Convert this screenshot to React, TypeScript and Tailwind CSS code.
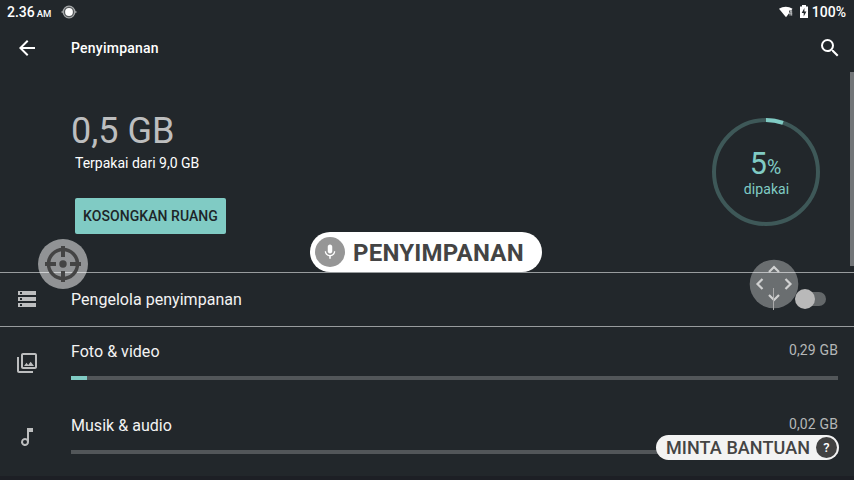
import React from 'react';

function StatusBar() {
  return (
    <div className="flex h-6 shrink-0 items-center justify-between pl-[7px] pr-2 text-white">
      <div className="flex items-center">
        <span className="text-[14px] font-medium leading-6">2.36</span>
        <span className="ml-[2px] mt-[3px] text-[9.5px] font-medium leading-4">AM</span>
        <svg className="ml-[10px]" width="16" height="16" viewBox="0 0 16 16">
          <circle cx="8" cy="8" r="5.8" fill="#55595b" stroke="#a4a7a8" strokeWidth="1.3" />
          <path d="M0.5 8h2M13.5 8h2" stroke="#a4a7a8" strokeWidth="1.5" />
          <circle cx="8" cy="8" r="3.9" fill="white" />
        </svg>
      </div>
      <div className="flex items-center">
        <svg width="16" height="14" viewBox="0 0 16 14">
          <path d="M0 3.8C4 1 9.5 1 13.5 3.8L7 12.3Z" fill="white" />
          <path d="M10 5.5h3.5v5.500h-3.500z" fill="#4a4f52" />
          <path d="M12.300 10.500V5.500l-2.100 3.300h3" stroke="#b7babc" strokeWidth="1" fill="none" />
        </svg>
        <svg className="ml-1" width="10" height="16" viewBox="0 0 10 16">
          <path d="M3 1h4v1.500h2V14H1V2.500h2z" fill="white" />
          <path d="M5.400 4L2.700 9h2v3.500L7.400 7.500H5.400z" fill="#22272b" />
        </svg>
        <span className="ml-[3px] text-[14px] font-medium leading-6">100%</span>
      </div>
    </div>
  );
}

function StorageRow({ icon, name, size, used }: { icon: React.ReactNode; name: string; size: string; used: number }) {
  return (
    <div className="flex h-[74px] shrink-0 pl-[15px] pr-4">
      <div className="flex w-14 items-center pb-[2px] text-[#bdbebf]">{icon}</div>
      <div className="flex-1">
        <div className="flex justify-between pt-[13px]">
          <span className="text-[16px] leading-6 tracking-[0.03px] text-[#f3f3f3]">{name}</span>
          <span className="text-[14px] leading-5 tracking-[0.13px] text-[#b5b7b8]">{size}</span>
        </div>
        <div className="mt-3 h-1 bg-[#525659]">
          <div className="h-1 bg-[#80cbc4]" style={{ width: used }} />
        </div>
      </div>
    </div>
  );
}

export default function App() {
  return (
    <div className="relative flex h-[480px] w-[854px] flex-col overflow-hidden bg-[#22272b] font-['Roboto',sans-serif]">
      <StatusBar />
      <header className="flex h-12 shrink-0 items-center pl-[15px] pr-3 text-white">
        <svg width="24" height="24" viewBox="0 0 24 24" fill="currentColor"><path d="M20 11H7.83l5.59-5.59L12 4l-8 8 8 8 1.41-1.41L7.83 13H20z" /></svg>
        <h1 className="ml-8 flex-1 text-[14px] font-medium leading-6 tracking-[0.23px]">Penyimpanan</h1>
        <svg width="24" height="24" viewBox="0 0 24 24" fill="currentColor"><path d="M15.5 14h-.79l-.28-.27A6.471 6.471 0 0 0 16 9.5 6.5 6.5 0 1 0 9.5 16c1.61 0 3.09-.59 4.23-1.57l.27.28v.79l5 4.99L20.49 19l-4.99-5zm-6 0C7.01 14 5 11.99 5 9.5S7.01 5 9.5 5 14 7.01 14 9.5 11.99 14 9.5 14z" /></svg>
      </header>
      <section className="flex h-[200px] shrink-0 justify-between pl-[71px] pr-[34px]">
        <div className="flex flex-col items-start">
          <div className="mt-[37px] text-[36px] leading-[44px] text-[#bdbebf]">0,5 GB</div>
          <div className="ml-1 text-[14px] leading-5 text-white">Terpakai dari 9,0 GB</div>
          <button className="ml-1 mt-[25px] h-9 w-[151px] rounded-[2px] bg-[#80cbc4] text-[14px] font-medium tracking-[0.06px] text-[#1d2528]">KOSONGKAN RUANG</button>
        </div>
        <div className="mt-[46px] grid h-[108px] w-[108px] text-[#80cbc4]">
          <svg className="col-start-1 row-start-1" width="108" height="108" viewBox="0 0 108 108" fill="none" strokeWidth="4">
            <circle cx="54" cy="54" r="52" stroke="#3e5858" />
            <path d="M54 2A52 52 0 0 1 71 4.9" stroke="#80cbc4" />
          </svg>
          <div className="col-start-1 row-start-1 flex flex-col items-center pt-[28px]">
            <div className="flex h-[35px] items-baseline pr-px leading-9"><span className="text-[30.5px] leading-9">5</span><span className="text-[19.5px] leading-9">%</span></div>
            <div className="pl-px text-[14px] leading-4 tracking-[0.1px]">dipakai</div>
          </div>
        </div>
      </section>
      <section className="flex h-[55px] shrink-0 items-center border-y border-[#989c9e] pl-[15px] pr-7">
        <svg className="mb-[2px] text-[#bdbebf]" width="24" height="24" viewBox="0 0 24 24" fill="currentColor"><path d="M3 20h18v-4H3v4zm2-3h2v2H5v-2zM3 4v4h18V4H3zm4 3H5V5h2v2zm-4 7h18v-4H3v4zm2-3h2v2H5v-2z" /></svg>
        <span className="ml-8 flex-1 text-[16px] leading-6 tracking-[0.03px] text-[#f3f3f3]">Pengelola penyimpanan</span>
        <div className="mb-px flex h-[14px] w-[28px] items-center rounded-full bg-[#64686a]">
          <div className="-ml-[3px] h-5 w-5 shrink-0 rounded-full bg-[#b9b9b9]" />
        </div>
      </section>
      <StorageRow name="Foto & video" size="0,29 GB" used={16} icon={<svg width="24" height="24" viewBox="0 0 24 24" fill="currentColor"><path d="M20 4v12H8V4h12m0-2H8c-1.1 0-2 .9-2 2v12c0 1.1.9 2 2 2h12c1.1 0 2-.9 2-2V4c0-1.1-.9-2-2-2zm-8.500 9.670l1.690 2.260 2.480-3.100L19 15H9zM2 6v14c0 1.100.900 2 2 2h14v-2H4V6H2z" /></svg>} />
      <StorageRow name="Musik & audio" size="0,02 GB" used={0} icon={<svg width="24" height="24" viewBox="0 0 24 24" fill="currentColor"><path d="M12 3v10.550A4 4 0 1 0 14 17V7h4V3h-6zm-2 16a2 2 0 1 1 0-4 2 2 0 0 1 0 4z" /></svg>} />
      <div className="mt-px h-1 bg-[#1d1f25]" />

      <div className="absolute right-0 top-[72px] h-[194px] w-1 bg-[#727578]" />

      <svg className="absolute left-[38px] top-[239px]" width="50" height="50" viewBox="0 0 50 50">
        <circle cx="25" cy="25" r="25" fill="white" fillOpacity=".5" />
        <circle cx="25" cy="25" r="14.5" fill="none" stroke="#444" strokeWidth="3.5" />
        <path d="M25 7v11M25 32v11M7 25h11M32 25h11" stroke="#444" strokeWidth="4" />
        <circle cx="25" cy="25" r="3.7" fill="#444" />
      </svg>

      <svg className="absolute left-[749px] top-[259px]" width="50" height="52" viewBox="0 0 50 52" fill="none">
        <circle cx="25" cy="25" r="24.3" fill="white" fillOpacity=".33" />
        <path d="M20 13l5-5 5 5M20 36l5 5 5-5M13.5 20l-5 5 5 5M36.500 20l5 5-5 5" stroke="#d0d1d1" strokeWidth="2.2" />
        <path d="M24.500 29v22" stroke="#aaa" />
      </svg>

      <div className="absolute left-[310px] top-[232px] flex h-10 w-[232px] items-center rounded-full bg-white pl-[5px]">
        <div className="flex h-[30px] w-[30px] items-center justify-center rounded-full bg-[#969696] text-white">
          <svg width="18" height="18" viewBox="0 0 24 24" fill="currentColor"><path d="M12 14c1.66 0 3-1.34 3-3V5c0-1.66-1.34-3-3-3S9 3.34 9 5v6c0 1.66 1.34 3 3 3zm5.300-3c0 3-2.540 5.100-5.300 5.100S6.700 14 6.700 11H5c0 3.410 2.720 6.230 6 6.720V21h2v-3.280c3.280-.480 6-3.300 6-6.720h-1.700z" /></svg>
        </div>
        <span className="ml-2 pt-px text-[24px] font-bold leading-10 tracking-[0.23px] text-[#444]">PENYIMPANAN</span>
      </div>

      <div className="absolute left-[656px] top-[435px] flex h-[25px] w-[183px] items-center rounded-full bg-[#f3f3f3] pl-[10px]">
        <span className="text-[18px] font-medium leading-[25px] tracking-[0.08px] text-[#444]">MINTA BANTUAN</span>
        <span className="absolute right-[2px] top-[2px] flex h-[21px] w-[21px] items-center justify-center rounded-full bg-[#424242] text-[13px] font-medium text-white">?</span>
      </div>
    </div>
  );
}
